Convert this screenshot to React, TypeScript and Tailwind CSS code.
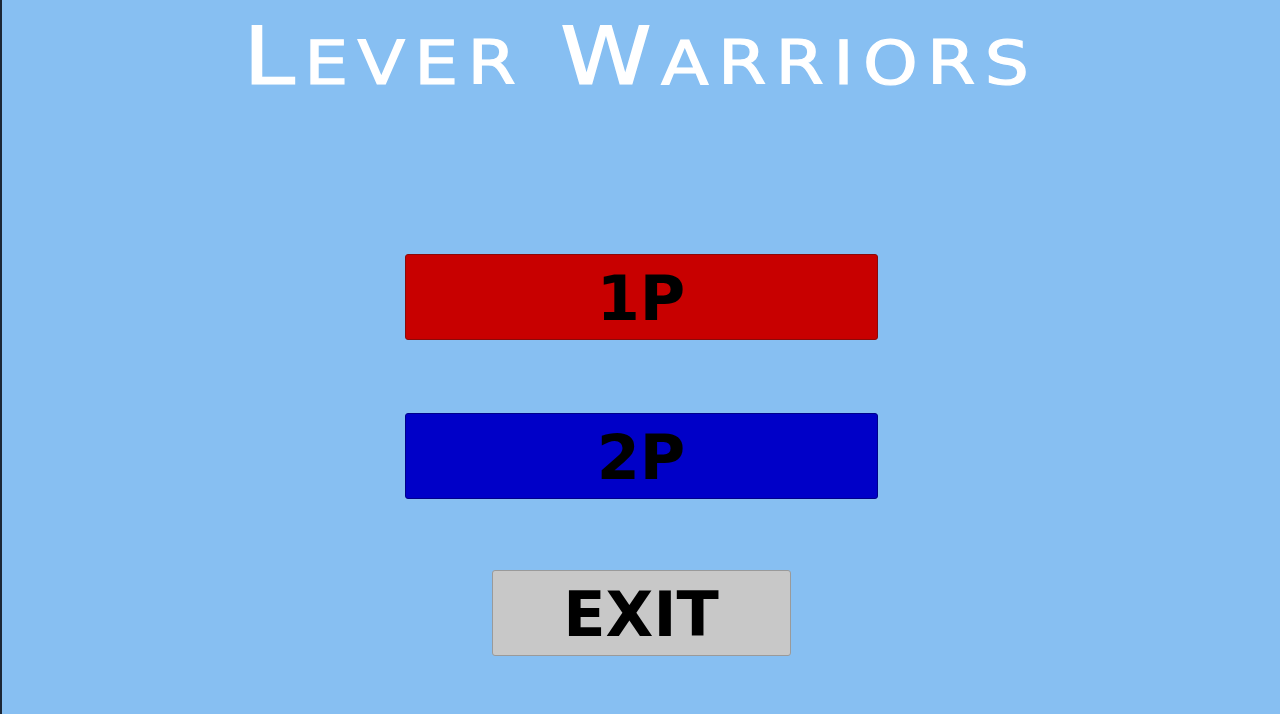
const titleFont = { fontFamily: '"DejaVu Sans", "Liberation Sans", sans-serif' };
const buttonFont = { fontFamily: '"DejaVu Sans", "Liberation Sans", sans-serif' };

function SmallCaps({ word }: { word: string }) {
  return (
    <span>
      <span className="text-[80px]">{word[0]}</span>
      <span className="text-[60px]">{word.slice(1).toUpperCase()}</span>
    </span>
  );
}

function MenuButton({ label, className }: { label: string; className: string }) {
  return (
    <button
      className={`flex h-[86px] items-center justify-center rounded-[3px] border pt-[4px] text-[62px] font-bold leading-none text-black ${className}`}
      style={buttonFont}
    >
      {label}
    </button>
  );
}

export default function App() {
  return (
    <div className="flex h-[714px] w-[1280px] flex-col items-center overflow-hidden border-l-2 border-[#1c2635] bg-[#87bff2]">
      {/* title glyphs are stretched wide and thickened with a stroke */}
      <h1
        className="mt-[17px] flex scale-x-[1.16] gap-[30px] leading-none tracking-[8px] text-white [-webkit-text-stroke:1.2px_white]"
        style={titleFont}
      >
        <SmallCaps word="Lever" />
        <SmallCaps word="Warriors" />
      </h1>

      <div className="mt-[157px] flex flex-col items-center">
        <MenuButton label="1P" className="w-[473px] border-[#8a0a0a] bg-[#c80000]" />
        <MenuButton label="2P" className="mt-[73px] w-[473px] border-[#00008a] bg-[#0000c8]" />
        <MenuButton label="EXIT" className="mt-[71px] w-[299px] border-[#9a9a9a] bg-[#c8c8c8]" />
      </div>
    </div>
  );
}
